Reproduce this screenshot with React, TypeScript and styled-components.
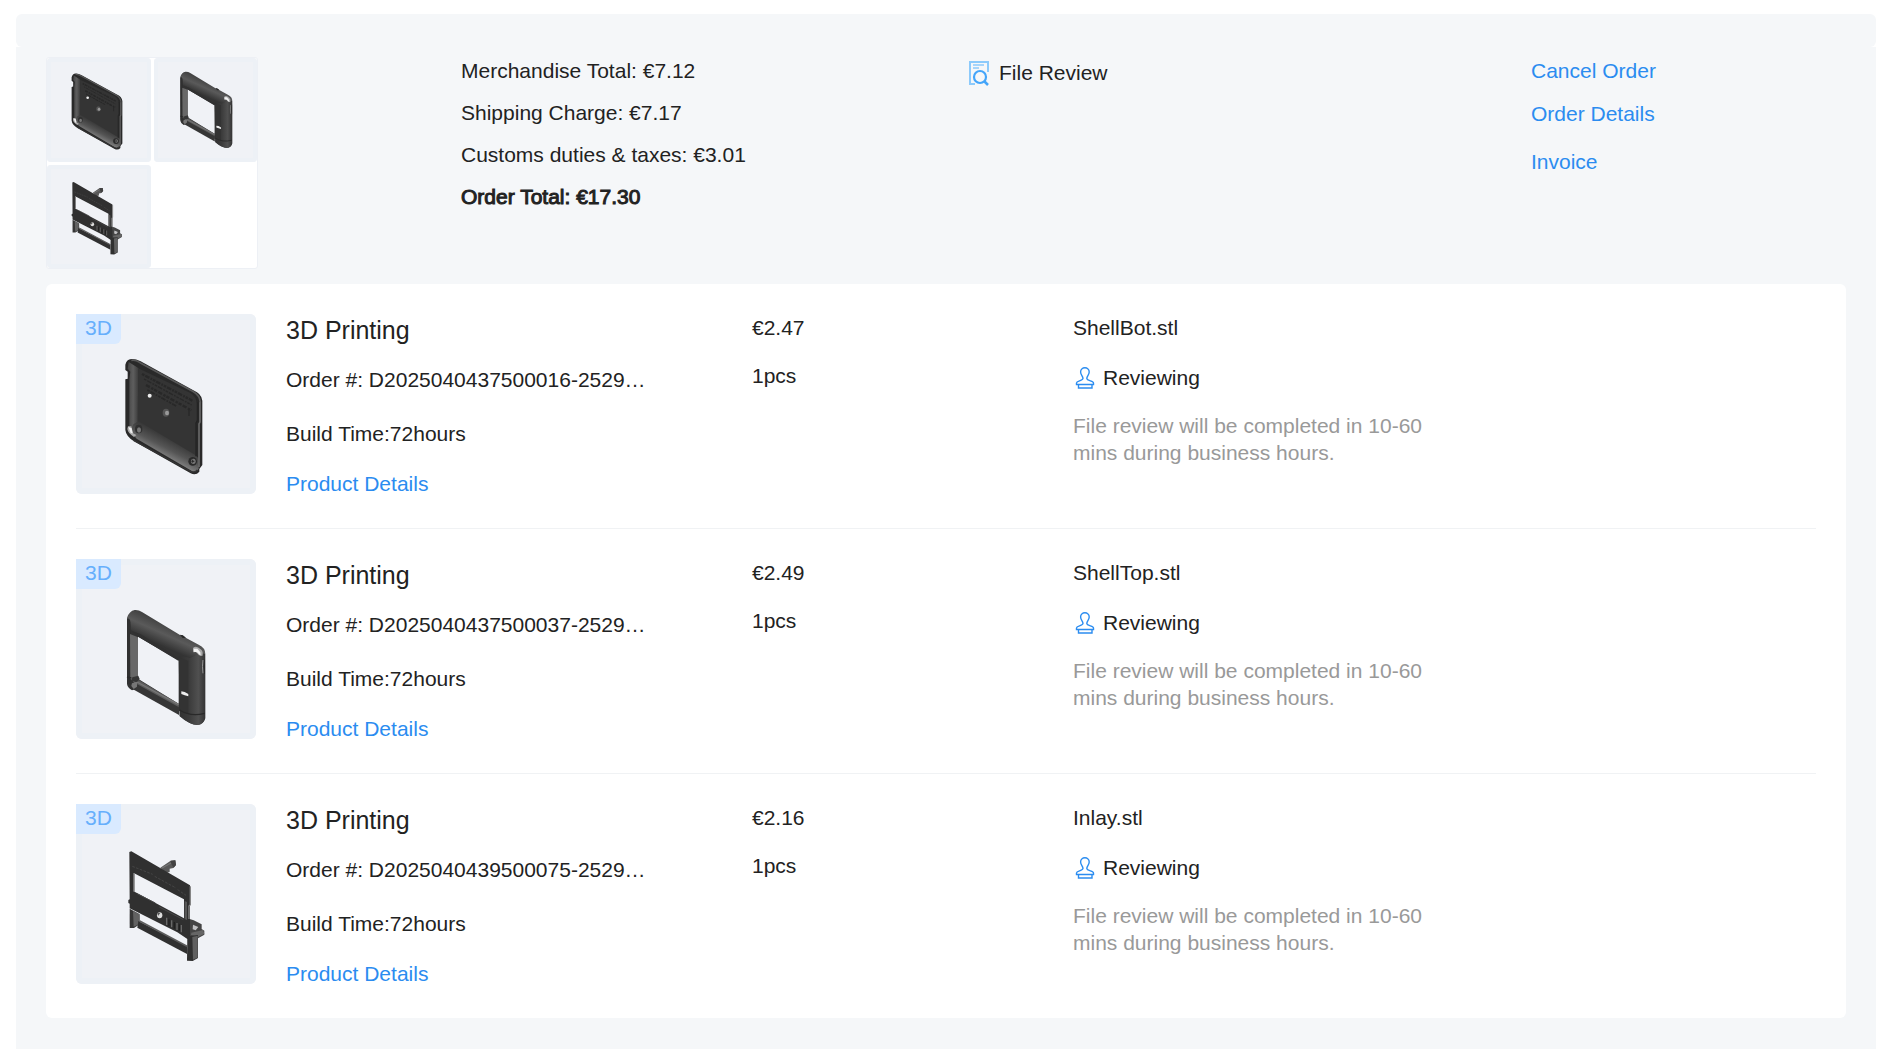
import React from "react";
import styled, { createGlobalStyle } from "styled-components";

const GlobalStyle = createGlobalStyle`
  *, *::before, *::after { box-sizing: border-box; }
  body {
    margin: 0;
    background: #fff;
    color: #222;
    font-family: "Liberation Sans", Arial, sans-serif;
    font-size: 21px;
    line-height: 24px;
  }
  h2, p, ul, figure { margin: 0; padding: 0; }
  ul { list-style: none; }
`;

const Page = styled.main`
  padding: 14px 15px 14px 16px;
`;

const TopBar = styled.div`
  height: 33px;
  border-radius: 6px;
  background: #f5f7f9;
`;

const OrderCard = styled.article`
  padding: 10px 30px 31px;
  background: #f5f7f9;
`;

const Summary = styled.header`
  display: grid;
  grid-template-columns: minmax(0, 415fr) minmax(0, 507fr) minmax(0, 563fr) minmax(0, 315fr);
  align-items: start;
  margin-bottom: 15px;
`;

const Collage = styled.div`
  display: grid;
  grid-template-columns: 1fr 1fr;
  gap: 3px;
  width: 212px;
  height: 212px;
  border: 1px solid #edf0f5;
  border-radius: 3px;
  background: #fff;
`;

const Tile = styled.figure<{ $ring: number }>`
  display: flex;
  overflow: hidden;
  border-radius: ${(p) => (p.$ring > 5 ? 6 : 4)}px;
  background: #f0f2f6;
  box-shadow: inset 0 0 0 ${(p) => p.$ring}px #edf1f6;

  svg { width: 100%; height: 100%; }
`;

const Totals = styled.ul`
  display: grid;
  gap: 18px;
  padding-top: 2px;
`;

const TotalLine = styled.li<{ $strong?: boolean }>`
  -webkit-text-stroke: ${(p) => (p.$strong ? "1px #222" : "0")};
`;

const Stage = styled.div`
  padding-top: 2px;
`;

const Status = styled.p<{ $gap: number }>`
  display: flex;
  align-items: center;
  gap: ${(p) => p.$gap}px;
  height: 28px;
`;

const Actions = styled.nav`
  display: flex;
  flex-direction: column;
  align-items: flex-start;
  gap: 19px;
  padding-top: 2px;
`;

const TextLink = styled.a<{ $apart?: boolean }>`
  margin-top: ${(p) => (p.$apart ? 5 : 0)}px;
  color: #2b8cf0;
  text-decoration: none;
  &:hover { text-decoration: underline; }
`;

const Items = styled.ul`
  padding: 0 30px;
  border-radius: 6px;
  background: #fff;
`;

const Item = styled.li`
  display: grid;
  grid-template-columns: 210px minmax(0, 466fr) minmax(0, 321fr) minmax(0, 743fr);
  align-items: start;
  padding: 30px 0 32px;
  & + & { border-top: 1px solid #f0f2f4; }
`;

const Preview = styled.div`
  position: relative;
  width: 180px;
  height: 180px;

  figure { height: 100%; }
`;

const Badge = styled.span`
  position: absolute;
  top: 0;
  left: 0;
  padding: 2px 9px 4px;
  border-bottom-right-radius: 6px;
  background: #d9eaff;
  color: #66affc;
`;

const Column = styled.div`
  display: flex;
  flex-direction: column;
  align-items: flex-start;
  gap: 24px;
  padding-top: 2px;
`;

const Info = styled(Column)`
  gap: 0;
`;

const Title = styled.h2`
  margin-bottom: 24px;
  font-size: 25px;
  font-weight: 400;
  line-height: 28px;
`;

const OrderNumber = styled.p`
  margin-bottom: 30px;
  white-space: nowrap;
`;

const BuildTime = styled.p`
  margin-bottom: 26px;
`;

const Review = styled.div`
  display: grid;
  gap: 20px;
`;

const Note = styled.p`
  max-width: 360px;
  color: #999;
  line-height: 27px;
`;

type Part = "bottom" | "top" | "inlay";

/* Each part is drawn once; the frames show it in the row and in the collage. */
const frames: Record<Part, { row: string; collage: string }> = {
  bottom: { row: "48 72 540 540", collage: "84 136 471 471" },
  top: { row: "48 57 540 540", collage: "82 148 468 468" },
  inlay: { row: "48 39 540 540", collage: "93 104 470 470" },
};

const BottomShell = ({ id }: { id: string }) => (
  <>
    <defs>
      <linearGradient id={`${id}-wall`} x1="0" x2="1">
        <stop offset="0" stopColor="#444" />
        <stop offset="0.5" stopColor="#5e5e5e" />
        <stop offset="1" stopColor="#393939" />
      </linearGradient>
      <linearGradient id={`${id}-floor`} gradientUnits="userSpaceOnUse" x1="330" y1="440" x2="300" y2="497">
        <stop offset="0" stopColor="#343434" />
        <stop offset="0.55" stopColor="#555" />
        <stop offset="1" stopColor="#858585" />
      </linearGradient>
    </defs>
    <path d="M196 224Q200 208 214 207Q226 206 242 214L400 301Q425 311 427 332V525L418 537V545Q408 557 392 550L222 454Q198 439 196 420V268L203 266V245L196 240Z" fill="#292929" />
    <path d="M206 216L236 235V405L229 430L208 415V268L211 245L203 236Z" fill={`url(#${id}-wall)`} />
    <path d="M235 235L391 309Q410 321 410 341V502L395 508L244 407L233 394Z" fill="#343434" />
    <path d="M236 394L402 493L416 505V535Q411 547 397 544L230 446L212 425L220 403Z" fill={`url(#${id}-floor)`} />
    <path d="M214 211Q225 208 240 218L398 304Q420 316 421 338" fill="none" stroke="#585858" strokeWidth="5" />
    <path d="M420 337V396L417 402V531" fill="none" stroke="#696969" strokeWidth="5" />
    <path d="M413 337V391L408 399V499" fill="none" stroke="#242424" strokeWidth="4" />
    <path d="M204 409L214 409L219 430L229 435L222 441Q204 430 202 417Z" fill="#aaa" />
    <path d="M205 411L215 415L218 430L212 429Z" fill="#eee" />
    <path d="M221 451L389 543Q402 551 412 540" fill="none" stroke="#343434" strokeWidth="4" />
    <g fill="none" stroke="#282828" strokeWidth="7" strokeDasharray="8 3 14 4 5 3">
      <path d="M246 252L397 332" />
      <path d="M258 285L394 361" strokeDasharray="13 5 7 3 10 4" />
      <path d="M262 300L350 349" strokeWidth="5" />
      <path d="M252 267L395 345" strokeWidth="4" />
      <path d="M387 357V378" strokeDasharray="none" strokeWidth="4" />
    </g>
    <circle cx="269" cy="317" r="6" fill="#eee" />
    <ellipse cx="318" cy="368" rx="10" ry="12" fill="#555" />
    <ellipse cx="321" cy="369" rx="6" ry="7" fill="#999" />
    <ellipse cx="236" cy="417" rx="11" ry="13" fill="#303030" />
    <ellipse cx="237" cy="420" rx="6" ry="8" fill="#777" />
    <ellipse cx="398" cy="514" rx="13" ry="13" fill="#2a2a2a" />
    <ellipse cx="400" cy="514" rx="7" ry="8" fill="#787878" />
    <path d="M398 509V518M394 514H403" stroke="#282828" strokeWidth="3" />
  </>
);

const TopShell = ({ id }: { id: string }) => (
  <>
    <defs>
      <linearGradient id={`${id}-bevel`} gradientUnits="userSpaceOnUse" x1="310" y1="250" x2="284" y2="308">
        <stop offset="0" stopColor="#444" />
        <stop offset="0.45" stopColor="#5a5a5a" />
        <stop offset="1" stopColor="#333" />
      </linearGradient>
      <linearGradient id={`${id}-side`} x1="0" x2="1">
        <stop offset="0" stopColor="#303030" />
        <stop offset="0.4" stopColor="#3b3b3b" />
        <stop offset="0.75" stopColor="#505050" />
        <stop offset="1" stopColor="#353535" />
      </linearGradient>
    </defs>
    <path
      fillRule="evenodd"
      fill={`url(#${id}-bevel)`}
      d="M201 233Q208 213 224 210Q236 209 246 216L360 285L368 286L377 293L416 314Q436 323 436 342V535Q431 554 412 555Q389 554 359 527V514L225 448L216 451Q203 444 201 432ZM234 290V416L356 491V361Z"
    />
    <path d="M201 236Q212 231 212 256V435L202 427Z" fill="#303030" />
    <path d="M210 282L234 292V417L226 431L211 416Z" fill="#686868" />
    <path d="M209 269L235 290L356 363V354L242 283L209 270Z" fill="#313131" />
    <path d="M356 348Q378 350 389 354Q405 349 419 338L435 342V535Q430 553 413 555Q387 554 359 529Z" fill={`url(#${id}-side)`} />
    <path d="M357 354L385 362V520L360 510Z" fill="#333" />
    <path d="M225 429L236 420L356 491V513L225 443Z" fill="#5d5d5d" />
    <path d="M232 433L357 502V525L219 448Z" fill="#363636" />
    <path d="M231 426L356 494" stroke="#777" strokeWidth="4" />
    <path d="M217 412L235 407L239 417L230 427L214 422Z" fill="#363636" />
    <path d="M216 430L231 425V440L221 447L214 438Z" fill="#777" />
    <path d="M201 411L214 414" stroke="#292929" strokeWidth="4" />
    <path d="M360 284L368 286L378 293L368 294Z" fill="#292929" />
    <path d="M359 510Q391 531 434 520" fill="none" stroke="#292929" strokeWidth="4" />
    <path d="M399 324Q409 315 422 328Q431 335 427 348L417 346L408 336L400 337Z" fill="#aaa" />
    <path d="M401 326L412 326L421 337L422 347L411 337L401 335Z" fill="#f3f3f3" />
    <path d="M429 360Q426 378 429 400" fill="none" stroke="#999" strokeWidth="3" />
    <path d="M433 359V402" stroke="#292929" strokeWidth="3" />
    <path d="M364 454L374 456L385 462V469L374 466L364 462Z" fill="#eee" />
  </>
);

const Inlay = () => (
  <>
    <path d="M301 230L332 209L346 208L348 222L340 231L329 233V243L316 246Z" fill="#595959" />
    <path d="M332 209L346 208L348 222L341 230L334 219Z" fill="#424242" />
    <path d="M306 231L333 216" stroke="#757575" strokeWidth="4" />
    <path d="M389 384L401 388L425 400L425 414L433 419V431L414 442L386 440Z" fill="#454545" />
    <path d="M399 401L415 408L407 418L398 415Z" fill="#c2c2c4" />
    <path d="M394 425L429 417L433 428L414 438L393 432Z" fill="#666" />
    <path d="M382 436L414 432V501L398 510L381 509Z" fill="#303030" />
    <path d="M397 438L413 434V500L399 506Z" fill="#606060" />
    <path d="M209 353L239 370V400L222 411H209Z" fill="#363636" />
    <path d="M219 360L237 369V400L221 407Z" fill="#626262" />
    <path d="M235 390L381 465V489L232 410Z" fill="#303030" />
    <path d="M239 390L381 466" stroke="#5c5c5c" strokeWidth="5" />
    <path
      fillRule="evenodd"
      fill="#303030"
      d="M208 183L214 181L390 283V448L381 443L352 424L209 352V338L205 336V327L209 325ZM221 246V301L372 382V325Z"
    />
    <path d="M391 286V341L387 345V384" fill="none" stroke="#858585" strokeWidth="4" />
    <path d="M374 330L381 333V387L374 384Z" fill="#575757" />
    <path d="M222 247V302" stroke="#6c6c6c" strokeWidth="4" />
    <path d="M217 226L278 250M284 256L348 291M353 296L378 313" fill="none" stroke="#505050" strokeWidth="2" strokeDasharray="8 4" />
    <path d="M231 308L286 336M298 348L370 386" stroke="#484848" strokeWidth="3" />
    <ellipse cx="299" cy="373" rx="8" ry="9" fill="#dedede" />
    <path d="M292 365L301 366L294 375Z" fill="#555" />
    <path d="M320 380V402M335 388V409M351 396V417M364 402V424" stroke="#686868" strokeWidth="4" />
    <path d="M327 385V405M343 393V413M358 400V420" stroke="#202020" strokeWidth="4" />
  </>
);

function PartTile({ part, place }: { part: Part; place: "row" | "collage" }) {
  const id = `${place}-${part}`;
  return (
    <Tile $ring={place === "row" ? 6 : 4}>
      <svg viewBox={frames[part][place]} aria-hidden="true">
        {part === "bottom" && <BottomShell id={id} />}
        {part === "top" && <TopShell id={id} />}
        {part === "inlay" && <Inlay />}
      </svg>
    </Tile>
  );
}

const FileReviewIcon = () => (
  <svg width="21" height="26" viewBox="0 0 21 26" fill="none" aria-hidden="true">
    <path d="M7 24H2V2H20V12" stroke="#8ccafb" strokeWidth="2" />
    <path d="M5 5H16M5 8H11" stroke="#8ccafb" strokeWidth="1.5" />
    <circle cx="12" cy="17" r="6" stroke="#43a5fa" strokeWidth="2.2" />
    <path d="M16 21L20 25" stroke="#43a5fa" strokeWidth="2.5" />
  </svg>
);

const StampIcon = () => (
  <svg width="22" height="22" viewBox="0 0 22 22" fill="none" stroke="#2b8cf0" strokeWidth="1.4" aria-hidden="true">
    <path d="M10 11.5C10 9 7.600 8 7.600 5A4.300 4.300 0 0 1 16.200 5C16.200 8 13.800 9 13.800 11.500C14 14 20.500 13.800 20.500 16V17.500H3.500V16C3.500 13.800 9.800 14 10 11.500Z" />
    <path d="M5.500 17.500V21H19V17.500" />
  </svg>
);

const totals = [
  { label: "Merchandise Total", value: "€7.12" },
  { label: "Shipping Charge", value: "€7.17" },
  { label: "Customs duties & taxes", value: "€3.01" },
  { label: "Order Total", value: "€17.30", strong: true },
];

const items: { part: Part; order: string; price: string; file: string }[] = [
  { part: "bottom", order: "D2025040437500016-2529…", price: "€2.47", file: "ShellBot.stl" },
  { part: "top", order: "D2025040437500037-2529…", price: "€2.49", file: "ShellTop.stl" },
  { part: "inlay", order: "D2025040439500075-2529…", price: "€2.16", file: "Inlay.stl" },
];

export default function App() {
  return (
    <>
      <GlobalStyle />
      <Page>
        <TopBar />
        <OrderCard>
          <Summary>
            <Collage>
              {items.map((item) => (
                <PartTile key={item.part} part={item.part} place="collage" />
              ))}
            </Collage>
            <Totals>
              {totals.map((t) => (
                <TotalLine key={t.label} $strong={t.strong}>
                  {`${t.label}: ${t.value}`}
                </TotalLine>
              ))}
            </Totals>
            <Stage>
              <Status $gap={10}>
                <FileReviewIcon />
                File Review
              </Status>
            </Stage>
            <Actions>
              <TextLink href="#cancel">Cancel Order</TextLink>
              <TextLink href="#order">Order Details</TextLink>
              <TextLink href="#invoice" $apart>Invoice</TextLink>
            </Actions>
          </Summary>

          <Items>
            {items.map((item) => (
              <Item key={item.part}>
                <Preview>
                  <PartTile part={item.part} place="row" />
                  <Badge>3D</Badge>
                </Preview>
                <Info>
                  <Title>3D Printing</Title>
                  <OrderNumber>{`Order #: ${item.order}`}</OrderNumber>
                  <BuildTime>Build Time:72hours</BuildTime>
                  <TextLink href={`#${item.part}`}>Product Details</TextLink>
                </Info>
                <Column>
                  <p>{item.price}</p>
                  <p>1pcs</p>
                </Column>
                <Column>
                  <p>{item.file}</p>
                  <Review>
                    <Status $gap={8}>
                      <StampIcon />
                      Reviewing
                    </Status>
                    <Note>File review will be completed in 10-60 mins during business hours.</Note>
                  </Review>
                </Column>
              </Item>
            ))}
          </Items>
        </OrderCard>
      </Page>
    </>
  );
}
